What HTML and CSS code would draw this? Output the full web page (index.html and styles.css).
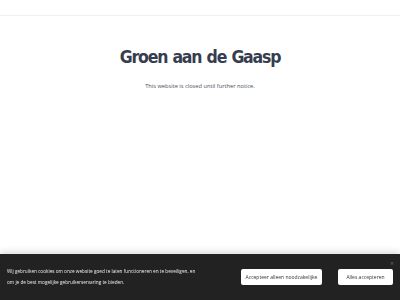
FILE: index.html
```html
<!DOCTYPE html>
<html lang="nl">
<head>
    <meta charset="UTF-8">
    <meta name="viewport" content="width=device-width, initial-scale=1.0">
    <title>Groen aan de Gaasp</title>
    <link rel="stylesheet" href="styles.css">
</head>
<body>
    <div class="page">
        <header class="topbar"></header>

        <main class="content">
            <h1>Groen aan de Gaasp</h1>
            <p>This website is closed until further notice.</p>
        </main>
    </div>

    <!-- cookie melding -->
    <div class="cookie-bar">
        <p class="cookie-text">Wij gebruiken cookies om onze website goed te laten functioneren en te beveiligen, en om je de best mogelijke gebruikerservaring te bieden.</p>
        <div class="cookie-actions">
            <button class="cookie-btn cookie-btn-wide">Accepteer alleen noodzakelijke</button>
            <button class="cookie-btn cookie-btn-all">Alles accepteren</button>
        </div>
        <span class="cookie-close">&times;</span>
    </div>
</body>
</html>
```

FILE: styles.css
```css
body {
    margin: 0;
    padding: 0;
    font-family: "Open Sans", Arial, sans-serif;
    background-color: #fff;
    height: 300px;
    overflow: hidden;
}

.topbar {
    height: 15px;
    border-bottom: 1px solid #f0f0f0;
}

.content {
    text-align: center;
    padding-top: 29px;
}

.content h1 {
    margin: 0;
    font-family: "DejaVu Sans Condensed", "DejaVu Sans", sans-serif;
    font-weight: bold;
    font-size: 17.5px;
    line-height: 24px;
    color: #363d4f;
    letter-spacing: -1.2px;
    word-spacing: 1px;
}

.content p {
    margin: 13px 0 0;
    font-size: 5.7px;
    color: #4a4f5c;
}

.cookie-bar {
    position: fixed;
    left: 0;
    right: 0;
    bottom: 0;
    height: 46px;
    background-color: #222;
    box-shadow: 0 -3px 6px rgba(0, 0, 0, 0.12);
    display: flex;
    align-items: center;
    justify-content: space-between;
    padding: 0 7px;
    box-sizing: border-box;
}

.cookie-text {
    width: 195px;
    margin: 0;
    font-size: 4.7px;
    line-height: 11px;
    color: #eee;
}

.cookie-actions {
    display: flex;
    gap: 16px;
}

.cookie-btn {
    height: 16px;
    padding: 0;
    background-color: #fff;
    color: #333;
    border: none;
    border-radius: 2px;
    font-family: "Open Sans", Arial, sans-serif;
    font-size: 5px;
    white-space: nowrap;
}

.cookie-btn-wide {
    width: 81px;
}

.cookie-btn-all {
    width: 55px;
}

.cookie-close {
    position: absolute;
    right: 6px;
    top: 5px;
    font-size: 7px;
    color: #666;
}
```
